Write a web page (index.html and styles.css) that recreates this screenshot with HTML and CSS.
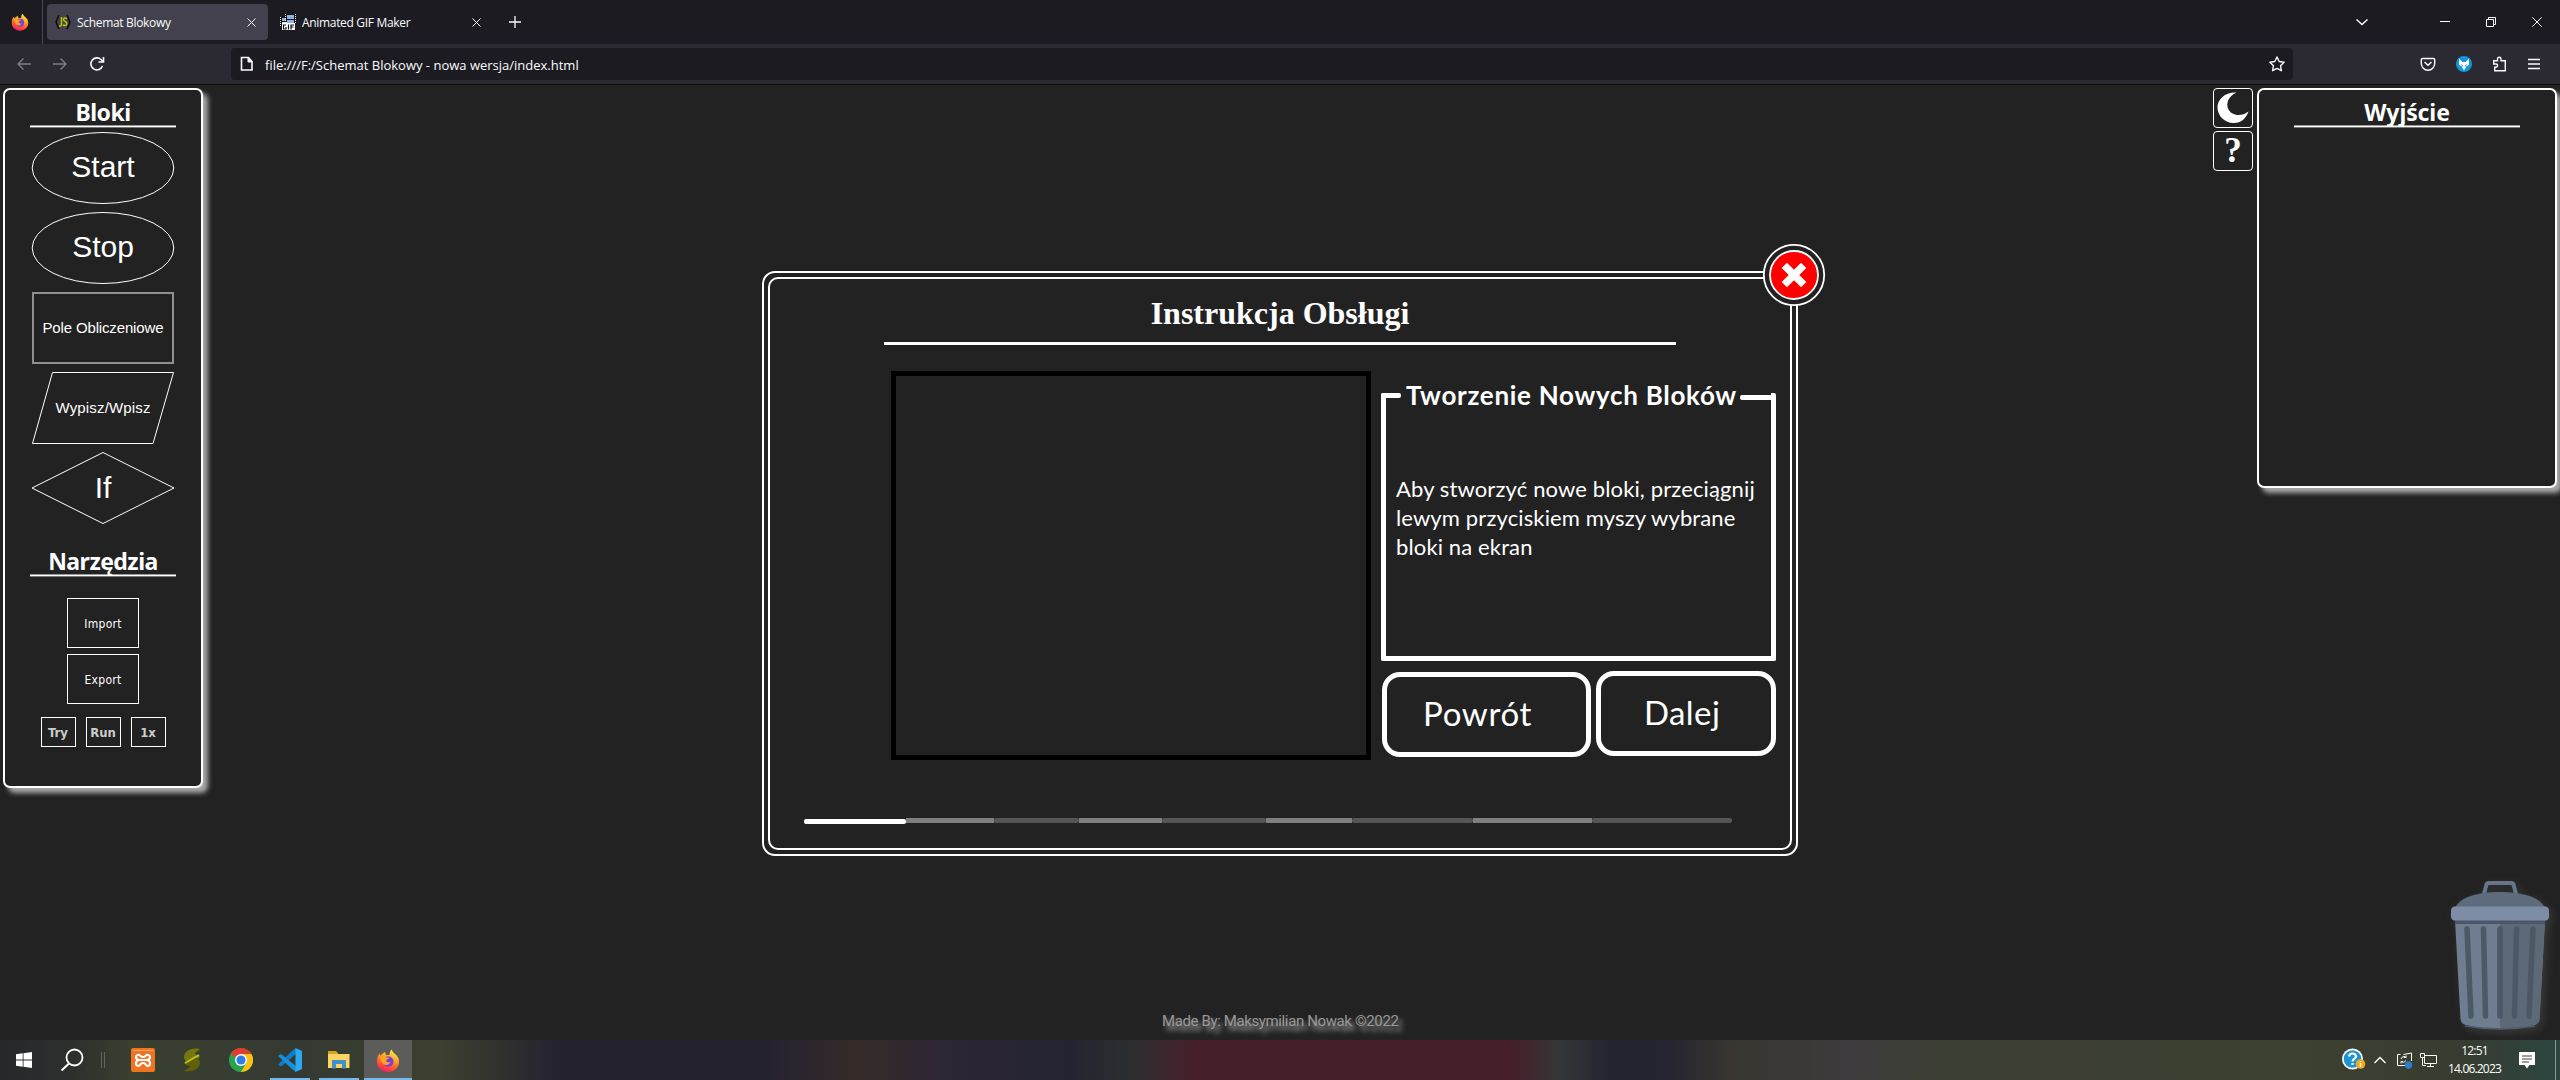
FILE: index.html
```html
<!DOCTYPE html>
<html lang="pl">
<head>
<meta charset="utf-8">
<title>Schemat Blokowy</title>
<link rel="stylesheet" href="styles.css">
</head>
<body>
<svg width="0" height="0" class="defs">
  <defs>
    <linearGradient id="flame" x1="0.7" y1="0" x2="0.3" y2="1">
      <stop offset="0" stop-color="#fff04a"/><stop offset="0.4" stop-color="#ffa01e"/><stop offset="0.75" stop-color="#ff4a38"/><stop offset="1" stop-color="#f01a6a"/>
    </linearGradient>
    <symbol id="firefox" viewBox="0 0 24 24">
      <path fill="url(#flame)" d="M15.500 1c1 1.500 1.300 2.600 3 4 2.600 2 4.500 4.300 4.500 8.300C23 19 18.300 23.500 12 23.500S1 19 1 13c0-3.500 1-6.500 2.500-8 .2 1 .5 1.500 1 2C6 5 8 4.200 9.500 3.500 9.200 5 9.500 6 10.500 6.500h3C13.500 4.500 14.200 2 15.500 1z"/>
      <circle cx="12.300" cy="13" r="5.200" fill="#7a3de0"/>
      <path fill="#ffa21e" d="M5 7.500c2-.8 4 .2 5 1.500h3.500c-.5 1.500-3 1.800-3.500 3 .3 1.800 2.500 2.500 4.500 1.200-.8 3-4.500 4.300-7 2.300C5 13.800 4 10.500 5 7.500z"/>
    </symbol>
  </defs>
</svg>

<header class="tabs">
  <svg class="ff-view" width="18" height="20"><use href="#firefox"/></svg>
  <i class="tab-sep"></i>
  <div class="tab active">
    <svg width="16" height="16" viewBox="0 0 16 16"><path d="M4 1 1 8l3 7M12 1l3 7-3 7" fill="none" stroke="#0c0c0c" stroke-width="1.500"/><path d="M6.500 3v7.500q0 2-2.500 1.500M12 4.500Q8.700 3 8.500 5.500c0 2.500 3.500 1.500 3.300 4.200Q11.500 12.500 8 11" fill="none" stroke="#b8c800" stroke-width="1.500"/></svg>
    <span class="tab-title">Schemat Blokowy</span>
    <svg class="x" width="9" height="9"><path d="m.5.5 8 8m0-8-8 8"/></svg>
  </div>
  <div class="tab">
    <svg width="16" height="16" viewBox="0 0 16 16"><path fill="#111" d="M5 0h11v9H5zM0 3h7v9H0z"/><path fill="#8fb2e6" d="M7 1h7v4H7zM7 6h7v3H7zM2 4h4v3H2z"/><path fill="#dfe8f5" d="M2 8h5v4H2z"/><path stroke="#fff" stroke-dasharray="1 1" d="M5.500 0v9M15.500 0v9M.5 3v9"/><path fill="#fff" d="M2 9h13v7H2z"/><path d="M6 11H3.500v4H6v-2M8.500 10.500v5M11 15.500V11h3m-3 2h2.500" fill="none" stroke="#111" stroke-width="1.200"/></svg>
    <span class="tab-title">Animated GIF Maker</span>
    <svg class="x" width="9" height="9"><path d="m.5.5 8 8m0-8-8 8"/></svg>
  </div>
  <svg class="plus" width="12" height="12"><path d="M6 0v12M0 6h12"/></svg>
  <div class="window-buttons">
    <svg width="12" height="12"><path d="m.5 3.500 5.500 5 5.500-5" stroke-width="1.500"/></svg>
    <svg width="10" height="12"><path d="M0 5.500h10"/></svg>
    <svg width="10" height="12"><path d="M.5 3.500h7v7h-7zM2.500 3V1.500h7v7H8"/></svg>
    <svg width="10" height="12"><path d="m.3 1.300 9.400 9.400m0-9.400L.3 10.700"/></svg>
  </div>
</header>

<nav class="toolbar">
  <svg class="dim" width="14" height="12"><path d="M14 6H1m5.500-5.500L1 6l5.500 5.500"/></svg>
  <svg class="dim" width="14" height="12"><path d="M0 6h13M7.500.5 13 6l-5.500 5.500"/></svg>
  <svg width="16" height="16"><path stroke-width="1.600" d="M13.500 10A6 6 0 1 1 12 3.500l2 2M14.500 1v5h-5"/></svg>
  <div class="urlbar">
    <svg width="14" height="16"><path stroke-width="1.600" d="M2.500 1.500h6l3.500 4v8.500H1.500V1.500z"/><path fill="#fbfbfe" d="M8 1.500v4.500h4z"/></svg>
    <span class="url">file:///F:/Schemat Blokowy - nowa wersja/index.html</span>
    <svg class="star" width="16" height="16"><path stroke-width="1.400" stroke-linejoin="round" d="m8 1 2.200 4.500 4.900.7-3.600 3.500.9 5L8 12.400l-4.400 2.300.9-5L.9 6.200l4.900-.7z"/></svg>
  </div>
  <div class="tools">
    <svg width="16" height="16"><path stroke-width="1.400" d="M2.500 2.500h11q1.200 0 1.200 1.200V7.500A6.700 6.700 0 0 1 1.300 7.500V3.700q0-1.200 1.200-1.200zM4.500 6 8 9.200 11.500 6"/></svg>
    <svg width="16" height="16"><circle cx="8" cy="8" r="8" fill="#1496dc" stroke="none"/><path fill="#fff" stroke="none" d="m3 2.500 3.500 3.500h3L13 2.500v6.500l-2.300 1L8 14.500 5.300 10 3 9z"/><path fill="#1496dc" stroke="none" d="m4.500 8 2.700 1.500L7 11zM11.500 8 8.800 9.500 9 11z"/></svg>
    <svg width="16" height="16"><path stroke-width="1.400" d="M1.700 4.700H5.500V3a1.700 1.700 0 0 1 3.500 0v1.700h4.300v10H2.700v-3.500H4a1.500 1.500 0 0 0 0-3.200H1.700z"/></svg>
    <svg width="12" height="16"><path stroke-width="1.300" d="M0 3.500h12M0 8h12M0 12.500h12"/></svg>
  </div>
</nav>

<main class="workspace">
  <aside class="panel blocks">
    <h2>Bloki</h2>
    <div class="shapes">
      <svg width="144" height="72"><ellipse cx="72" cy="36" rx="70.800" ry="35.500"/><text x="72" y="45" class="big">Start</text></svg>
      <svg width="144" height="72"><ellipse cx="72" cy="36" rx="70.800" ry="35.500"/><text x="72" y="45" class="big">Stop</text></svg>
      <svg width="144" height="72"><rect class="soft" x="2" y="1" width="140" height="70"/><text x="72" y="41" textLength="121">Pole Obliczeniowe</text></svg>
      <svg width="144" height="72"><path d="M21.500.5h121l-20.500 71H1.500z"/><text x="72" y="41" textLength="95">Wypisz/Wpisz</text></svg>
      <svg width="144" height="72"><path d="M72 .5 143 36 72 71.500 1 36z"/><text x="72" y="45.500" class="big">If</text></svg>
    </div>
    <h2 class="second">Narzędzia</h2>
    <div class="files"><button>Import</button><button>Export</button></div>
    <div class="runs"><button>Try</button><button>Run</button><button>1x</button></div>
  </aside>

  <div class="side">
    <div class="toggles">
      <button><svg width="34" height="34" viewBox="0 0 34 34"><path fill="#fff" d="M20.500 1.500C12.500 5 10 12 12 17.500c3 7 12.500 9 20.500 3C30 28 24.500 32.300 17.500 32 9 32 1.500 25 1.500 16.500S9.500.8 20.500 1.500z"/></svg></button>
      <button class="help">?</button>
    </div>
    <section class="panel output"><h2>Wyjście</h2></section>
  </div>

  <section class="dialog">
    <div class="sheet">
      <h1>Instrukcja Obsługi</h1>
      <div class="content">
        <div class="preview"></div>
        <div class="guide">
          <div class="note">
            <div class="legend"><i></i><b>Tworzenie Nowych Bloków</b><i class="rest"></i></div>
            <p>Aby stworzyć nowe bloki, przeciągnij<br>lewym przyciskiem myszy wybrane<br>bloki na ekran</p>
          </div>
          <div class="steps"><button class="prev">Powrót</button><button class="next">Dalej</button></div>
        </div>
      </div>
      <div class="progress"><i class="done"></i><i></i><i></i><i></i><i></i><i></i><i></i><i></i><i></i></div>
    </div>
    <svg class="close" width="64" height="64"><circle cx="32" cy="32" r="30.200" fill="#222" stroke="#fff" stroke-width="1.800"/><circle cx="32" cy="32" r="24" fill="red" stroke="#fff" stroke-width="1.800"/><path d="m22.300 22.300 19.400 19.400m0-19.400L22.300 41.700" stroke="#fff" stroke-width="7.500"/></svg>
  </section>

  <svg class="trash" width="98" height="150" viewBox="0 0 98 150">
    <path d="M33 13 35.500 3.500Q36 2 37.500 2h23Q62 2 62.500 3.500L65 13" fill="none" stroke="#66758a" stroke-width="4"/>
    <path fill="#5e6b7c" d="M4 28C7 16 28 11 49 11s42 5 45 17z"/>
    <path fill="#6f7d90" d="M4 39h90l-5.500 99q-.4 5-5.500 6-34 8-68 0-5-1-5.500-6z"/>
    <path fill="#5d6977" d="M49 39h45l-5.500 99q-.4 5-5.500 6-17 4-34 4z"/>
    <path fill="#4c5668" d="M4 39h90v4H4z"/>
    <path fill="#7d8da6" d="M3 25.500h92q3 1 3 4v6q0 3-3 4H3q-3-1-3-4v-6q0-3 3-4z"/>
    <g stroke="#4d5866" stroke-width="5.500" stroke-linecap="round"><path d="m16 48 4 87M32.500 48l2 87M49 48v87M65.500 48l-2 87M82 48l-4 87"/></g>
    <path d="M14 145q35 6 70 0" fill="none" stroke="#4f5c6d" stroke-width="1.500"/>
  </svg>
  <footer class="credit">Made By: Maksymilian Nowak ©2022</footer>
</main>

<div class="taskbar">
  <svg class="start" width="16" height="16"><path fill="#fff" d="m0 2.300 6.700-1v6.300H0zM7.500 1.200 16 0v7.600H7.500zM0 8.400h6.700v6.300L0 13.800zM7.500 8.400H16V16l-8.500-1.200z"/></svg>
  <svg class="search" width="24" height="24"><circle cx="14.500" cy="9.500" r="8" fill="none" stroke="#fff" stroke-width="1.800"/><path d="M9 15.500 1.500 22.500" stroke="#fff" stroke-width="2"/></svg>
  <i class="grip"></i>
  <div class="apps">
    <div class="app"><svg width="24" height="24"><rect width="24" height="24" rx="2" fill="#ef7422"/><path d="M2 2.500h20" stroke="#f8a568"/><path d="M9 12h6M9 12c-2 0-4-1-4-3s3-3 4-1.500 1 1.500 3 1.500 2 0 3-1.500 4-.5 4 1.500-2 3-4 3M9 12c-2 0-4 1-4 3.500s3 3 4 1.500 1-2 3-2 2 .5 3 2 4 1 4-1.500-2-3.500-4-3.500" fill="none" stroke="#fff" stroke-width="2.200"/></svg></div>
    <div class="app"><svg width="18" height="24"><path fill="#77760f" d="M17 1C7-1 1 4 1 9c0 4 4 5 7 6l9-6c-2-3-6-2-5-4z"/><path fill="#626108" d="M1 23c10 1.500 16-3 16-8 0-4-3-5-6-6l-10 6c2 3 7 2 6 4z"/><path stroke="#c0c020" stroke-width="2" d="m2 15 14-8"/></svg></div>
    <div class="app"><svg width="24" height="24"><circle cx="12" cy="12" r="12" fill="#2ba24c"/><path fill="#e33b2e" d="M12 12 1.600 6A12 12 0 0 1 22.400 6H12z"/><path fill="#fbc116" d="M22.400 6A12 12 0 0 1 12 24l5.200-9L12 6z"/><circle cx="12" cy="12" r="6" fill="#fff"/><circle cx="12" cy="12" r="4.600" fill="#2f7de9"/></svg></div>
    <div class="app open"><svg width="24" height="24"><path fill="#0f7fc9" d="M18 0v6L3 18.500 0 16.500 14 3z"/><path fill="#1590dc" d="M18 24v-6L3 6 0 8l14 13z"/><path fill="#2da9f3" d="m17.500 0 6.500 3v18l-6.500 3z"/></svg></div>
    <div class="app open"><svg width="24" height="20"><path fill="#e0a01c" d="M1 1h8l2 2v4H1z"/><path fill="#fcd462" d="M1 4h21.500v14H1z"/><path fill="#3e92cc" d="M5 18.500V10h14v8.500h-4V14H9v4.500z"/></svg></div>
    <div class="app open current"><svg width="24" height="25"><use href="#firefox"/></svg></div>
  </div>
  <div class="tray">
    <svg width="24" height="24"><circle cx="10.500" cy="11" r="10.500" fill="#fff"/><circle cx="10.500" cy="11" r="8.800" fill="#1c93d2"/><path d="M7 8.500q.5-3 3.500-3t3.500 2.800c0 2.500-3.500 2.500-3.500 5.200M10.500 15v2" fill="none" stroke="#fff" stroke-width="2.200"/><circle cx="18.500" cy="16" r="4.800" fill="#f0a81e"/><path d="M18.500 15v4m0-6v1" stroke="#fff" stroke-width="1.500"/></svg>
    <svg class="up" width="12" height="8"><path d="m.5 7 5.500-5.500L11.500 7" fill="none" stroke="#fff" stroke-width="1.300"/></svg>
    <svg class="sync" width="17" height="17"><path d="M9 13.500H1.500V2.500h3m3 0 8-1.500v8M5 7q1-3 4-2.500l1 1m0-2v2H8M5 11.500v-2h2m-2 0q2.500 2.500 5-1" fill="none" stroke="#fff"/><circle cx="12.500" cy="13" r="3.700" fill="#2f7cc9"/></svg>
    <svg class="net" width="17" height="15"><path d="M4.500 2.500h12v8h-12zM10.500 10.500v3M7 13.500h7M.5.500h4v4h-4zM2.500 5v7.500H6" fill="none" stroke="#fff"/></svg>
    <div class="clock"><span>12:51</span><span>14.06.2023</span></div>
    <svg width="16" height="17"><path fill="#fff" d="M0 0h16v13h-5.500L8 16.500 5.500 13H0z"/><path d="M3 4h10M3 7h10M3 10h7" stroke="#3a4038"/></svg>
    <i class="desktop"></i>
  </div>
</div>
</body>
</html>
```
FILE: styles.css
```css
* { box-sizing: border-box; }
body {
  margin: 0;
  width: 2560px;
  height: 1080px;
  overflow: hidden;
  display: flex;
  flex-direction: column;
  background: #222;
  color: #fff;
  font-family: "Open Sans", "Noto Sans", sans-serif;
}
svg { display: block; flex: none; }
.defs { position: absolute; }
button { background: none; color: inherit; font: inherit; letter-spacing: inherit; padding: 0; margin: 0; }

/* browser tabs */
.tabs { height: 44px; flex: none; background: #1c1b22; display: flex; align-items: center; font-size: 12px; color: #fbfbfe; }
.ff-view { margin-left: 11px; }
.tab-sep { width: 1px; height: 44px; margin: 0 4px 0 13px; background: #4a4953; }
.tab { width: 221px; height: 36px; margin-right: 4px; padding: 0 12px 0 8px; border-radius: 4px; display: flex; align-items: center; gap: 6px; }
.tab.active { background: #42414d; }
.tab-title { white-space: nowrap; letter-spacing: -0.32px; padding-top: 1px; }
.x { margin-left: auto; }
.x, .plus, .window-buttons svg, .toolbar svg { fill: none; stroke: #fbfbfe; }
.plus { margin-left: 12px; stroke-width: 1.300; }
.window-buttons { margin-left: auto; margin-right: 18px; display: flex; gap: 36px; }
.window-buttons svg:first-child { margin-right: 36px; }

/* navigation toolbar */
.toolbar { height: 41px; flex: none; background: #2b2a33; border-bottom: 1px solid #0c0c0d; display: flex; align-items: center; padding-left: 17px; gap: 22px; }
.toolbar .dim { stroke: #807f87; stroke-width: 1.300; }
.urlbar { width: 2062px; height: 32px; margin-left: 104px; padding: 0 8px 0 9px; background: #1c1b22; border-radius: 4px; display: flex; align-items: center; gap: 11px; font-size: 13px; color: #fbfbfe; }
.star { margin-left: auto; }
.tools { display: flex; gap: 20px; margin-left: 105px; }
.url { white-space: nowrap; padding-top: 2px; }

/* page */
.workspace { position: relative; flex: 1; display: flex; justify-content: space-between; align-items: flex-start; padding: 3px; overflow: hidden; }
.panel { border: 2px solid #fff; border-radius: 7px; box-shadow: 5px 5px 5px #aaa; background: #222; }
.blocks { width: 200px; height: 700px; display: flex; flex-direction: column; align-items: center; }
.panel h2 { margin: 0; width: 146px; height: 38px; padding-top: 7px; line-height: 30px; font-size: 23px; letter-spacing: -0.5px; font-family: "Noto Sans", sans-serif; text-align: center; white-space: nowrap; background: linear-gradient(#999 1px, #fff 1px 2px, #777 2px) bottom / 100% 3px no-repeat; }
.shapes { display: flex; flex-direction: column; gap: 8px; margin-top: 4px; }
.shapes svg { fill: none; stroke: #fff; stroke-width: 1; }
.shapes .soft { stroke: #909090; stroke-width: 2; }
.shapes text { fill: #fff; stroke: none; font: 15px "Liberation Sans", Arial, sans-serif; text-anchor: middle; }
.shapes .big { font-size: 30px; }
.panel h2.second { margin-top: 15px; }
.files { display: flex; flex-direction: column; gap: 6px; margin-top: 21px; font: 12px "DejaVu Sans Condensed", "DejaVu Sans", sans-serif; letter-spacing: 0.3px; }
.files button { width: 72px; height: 50px; padding-top: 1px; border: 1px solid #fff; }
.runs { display: flex; gap: 10px; margin-top: 13px; font: bold 13px "DejaVu Sans Condensed", "DejaVu Sans", sans-serif; color: #ccc; }
.runs button { width: 35px; height: 30px; border: 1px solid #fff; }

.side { display: flex; gap: 4px; }
.toggles { display: flex; flex-direction: column; gap: 3px; }
.toggles button { width: 40px; height: 40px; border: 1px solid #fff; border-radius: 4px; display: flex; align-items: center; justify-content: center; }
.toggles .help { font: bold 35px "Liberation Serif", serif; }
.output { width: 300px; height: 400px; display: flex; flex-direction: column; align-items: center; }
.panel.output h2 { width: 226px; letter-spacing: -0.1px; }

/* instruction dialog */
.dialog { position: absolute; left: 762px; top: 186px; width: 1036px; height: 585px; padding: 4px; border: 2px solid #fff; border-radius: 13px; background: #222; }
.sheet { height: 100%; border: 2px solid #fff; border-radius: 10px; display: flex; flex-direction: column; align-items: flex-start; }
.sheet h1 { margin: 0 0 0 114px; width: 792px; height: 66px; padding-top: 15px; border-bottom: 3px solid #fff; text-align: center; font: bold 32px/38px "Liberation Serif", serif; white-space: nowrap; }
.content { display: flex; gap: 10px; margin: 26px 0 0 121px; }
.preview { width: 480px; height: 389px; border: 5px solid #000; }
.guide { width: 395px; padding-top: 22px; font-family: Lato, sans-serif; }
.note { height: 268px; border: 5px solid #fff; border-top: 0; border-radius: 2px; }
.legend { display: flex; height: 12px; margin: 0 -5px; align-items: flex-start; font-size: 26px; letter-spacing: 0.7px; line-height: 5px; white-space: nowrap; }
.legend i { width: 20px; height: 5px; background: #fff; border-radius: 2px; margin-right: 5px; }
.legend .rest { flex: 1; margin: 2px 0 0 3px; }
.note p { margin: 69px 0 0 10px; font-size: 22px; letter-spacing: 0.13px; line-height: 29px; white-space: nowrap; }
.steps { display: flex; align-items: flex-start; gap: 5px; margin: 10px 0 0 1px; font-size: 33px; letter-spacing: 0.4px; }
.steps button { border: 5px solid #fff; border-radius: 18px; height: 85px; text-align: left; padding-bottom: 3px; }
.steps .prev { width: 209px; padding-left: 36px; margin-top: 1px; letter-spacing: 0.7px; }
.steps .next { width: 180px; padding-left: 43px; }
.progress { display: flex; height: 5px; margin: 58px 0 0 34px; }
.progress i { background: #7f7f7f; width: 88px; }
.progress i:nth-child(odd) { background: #555; border-radius: 2px; }
.progress i.done { width: 102px; background: #fff; margin: 1px 0 -1px; border-radius: 2px; }
.progress i:nth-child(3) { width: 85px; }
.progress i:nth-child(4) { width: 83px; }
.progress i:nth-child(5) { width: 104px; }
.progress i:nth-child(6) { width: 86px; }
.progress i:nth-child(7) { width: 121px; }
.progress i:nth-child(8) { width: 119px; }
.progress i:nth-child(9) { width: 140px; }
.progress i.done:first-child { background: #fff; }
.close { position: absolute; left: 998px; top: -30px; }

.trash { position: absolute; left: 2451px; top: 796px; filter: drop-shadow(3px 3px 4px #3a3a3a); }
.credit { position: absolute; left: 1162px; top: 926px; font: 15px/20px Roboto, sans-serif; letter-spacing: -0.38px; color: #999; text-shadow: 4px 5px 5px #aaa; white-space: nowrap; }

/* taskbar */
.taskbar { height: 40px; flex: none; display: flex; align-items: center; background: linear-gradient(90deg, #25292b 0, #2b2f2d 70px, #3a402f 130px, #343a32 300px, #3d4030 440px, #25222f 560px, #252230 770px, #352b29 860px, #2b2536 960px, #232432 1070px, #2c2f30 1130px, #45202b 1190px, #45202b 1515px, #343838 1560px, #232430 1610px, #252430 1670px, #38362f 1730px, #3d3b3d 1850px, #3c3f33 1940px, #3d4131 2300px, #383c30 2460px, #2b4540 2560px); }
.start { margin-left: 16px; }
.search { margin-left: 28px; }
.grip { margin: 0 14px 0 17px; width: 4px; height: 16px; border: solid #62655d; border-width: 0 1px; }
.apps { display: flex; gap: 1px; }
.app { width: 48px; height: 40px; display: flex; align-items: center; justify-content: center; border: solid transparent; border-width: 2px 0; }
.app.open { border-bottom-color: #76b9ed; width: 40px; margin: 0 4px; }
.app.current { background: #5c5c5b; border-top-color: #5c5c5b; width: 48px; margin: 0; }
.tray { margin-left: auto; display: flex; align-items: center; height: 40px; }
.up { margin-left: 8px; }
.sync { margin-left: 10px; }
.net { margin-left: 7px; }
.clock { width: 53px; margin: 0 18px 0 11px; display: flex; flex-direction: column; align-items: center; font-size: 12px; letter-spacing: -0.82px; line-height: 18px; white-space: nowrap; }
.desktop { width: 1px; height: 40px; margin: 0 4px 0 20px; background: #8d9690; }
```
